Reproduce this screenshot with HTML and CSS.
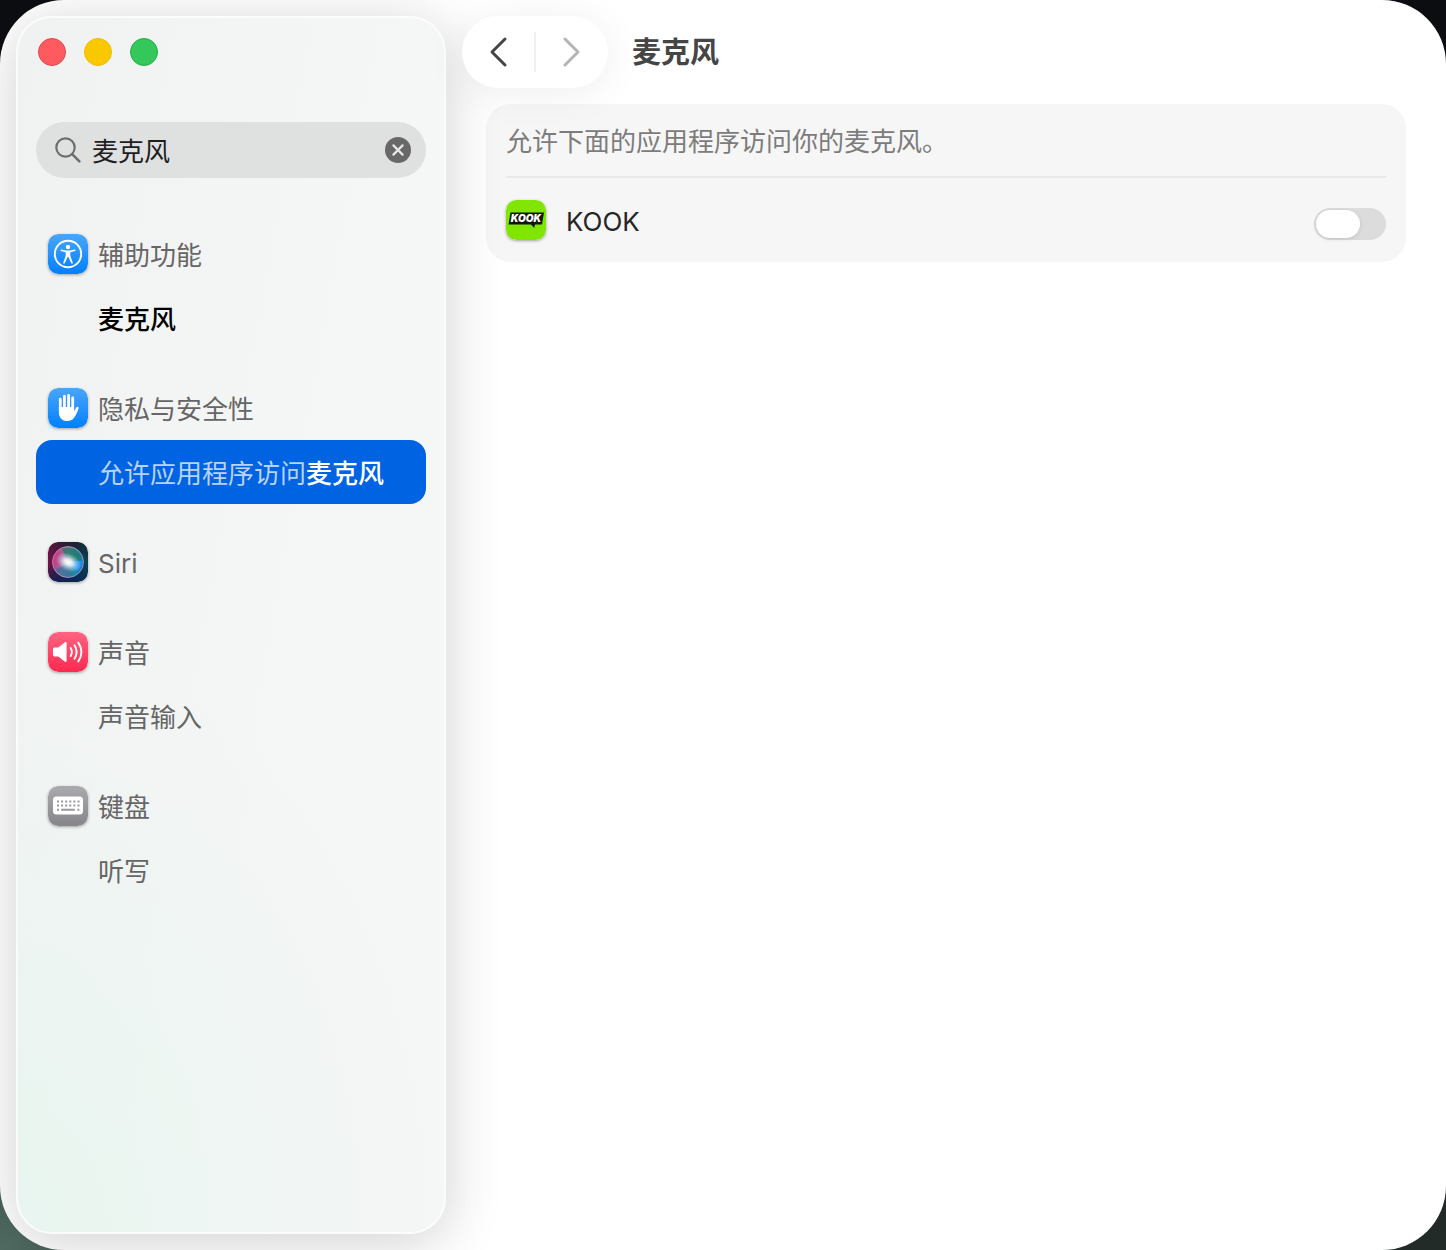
FILE: index.html
```html
<!DOCTYPE html>
<html lang="zh-CN">
<head>
<meta charset="utf-8">
<meta name="viewport" content="width=device-width, initial-scale=1">
<title>麦克风</title>
<link rel="stylesheet" href="styles.css">
</head>
<body>
<div class="window">
  <aside class="sidebar">
    <div class="lights">
      <button class="light light-close" aria-label="关闭"></button>
      <button class="light light-min" aria-label="最小化"></button>
      <button class="light light-zoom" aria-label="缩放"></button>
    </div>
    <form class="search" role="search">
      <label class="search-icon" for="q" aria-label="搜索">
        <svg width="28" height="28" viewBox="0 0 28 28" fill="none" stroke="#6e6e6e" stroke-width="2.2" stroke-linecap="round"><circle cx="11.5" cy="11.5" r="9.2"/><path d="M18.4 18.4l7 7" stroke-width="2.6"/></svg>
      </label>
      <input class="search-input" id="q" type="text" value="麦克风">
      <button class="search-clear" type="reset" aria-label="清除">
        <svg width="26" height="26" viewBox="0 0 26 26"><circle cx="13" cy="13" r="13" fill="#686868"/><path d="M8.4 8.4l9.2 9.2M17.6 8.4l-9.2 9.2" stroke="#e6e6e6" stroke-width="2.2" stroke-linecap="round"/></svg>
      </button>
    </form>
    <nav class="results">
      <section class="group">
        <a class="row" href="#accessibility">
          <svg class="icon" width="40" height="40" viewBox="0 0 40 40">
            <defs><linearGradient id="blue" x1="0" y1="0" x2="0" y2="1"><stop offset="0" stop-color="#4aa6f8"/><stop offset="1" stop-color="#0080ff"/></linearGradient></defs>
            <rect width="40" height="40" rx="10" fill="url(#blue)"/>
            <circle cx="20" cy="20" r="13.2" fill="none" stroke="#fff" stroke-width="1.9"/>
            <circle cx="20" cy="13" r="2.2" fill="#fff"/>
            <path d="M13.2 15.6c-.8-.2-1 1-.2 1.300l4.700 1.300v3.600l-2.500 7c-.3.900 1.100 1.400 1.500.5l3-6.500h.6l3 6.500c.4.900 1.800.4 1.500-.5l-2.500-7v-3.600l4.700-1.300c.8-.3.600-1.500-.2-1.300l-4.600 1h-4.400z" fill="#fff"/>
          </svg>
          <span>辅助功能</span>
        </a>
        <a class="row sub" href="#mic-accessibility"><span><b>麦克风</b></span></a>
      </section>
      <section class="group">
        <a class="row" href="#privacy">
          <svg class="icon" width="40" height="40" viewBox="0 0 40 40">
            <rect width="40" height="40" rx="10" fill="url(#blue)"/>
            <g fill="none" stroke="#fff" stroke-width="2.800" stroke-linecap="round"><path d="M12.300 11.200v12M16.400 8.200v14M20.600 7.400v14M24.700 9.800v13"/></g>
            <path d="M10.900 19h15.200v4.200l2.300-3.900c.7-1.100 2.700-.5 2.200 1-1.400 4.300-2.700 7.200-4.700 9.800-1.700 2.200-4 3-6.700 3-5 0-8.300-3.200-8.300-8.600z" fill="#fff"/>
          </svg>
          <span>隐私与安全性</span>
        </a>
        <a class="row sub selected" href="#mic" aria-current="page"><span>允许应用程序访问<b>麦克风</b></span></a>
      </section>
      <section class="group">
        <a class="row" href="#siri">
          <svg class="icon" width="40" height="40" viewBox="0 0 40 40">
            <defs>
              <linearGradient id="siri-bg" x1="0" y1=".2" x2="1" y2=".5"><stop offset="0" stop-color="#8a0f4a"/><stop offset=".45" stop-color="#27223f"/><stop offset="1" stop-color="#06464f"/></linearGradient>
              <linearGradient id="siri-shade" x1="0" y1="0" x2="0" y2="1"><stop offset="0" stop-color="#1b1c20" stop-opacity=".5"/><stop offset=".5" stop-color="#14204a" stop-opacity="0"/><stop offset="1" stop-color="#0b1e5c" stop-opacity=".7"/></linearGradient>
              <linearGradient id="siri-orb" x1="0" y1=".4" x2="1" y2=".6"><stop offset="0" stop-color="#d2327e"/><stop offset=".4" stop-color="#98729c"/><stop offset=".7" stop-color="#1d8f96"/><stop offset="1" stop-color="#1c78d8"/></linearGradient>
              <radialGradient id="siri-glow"><stop offset="0" stop-color="#fff"/><stop offset=".3" stop-color="#fff" stop-opacity=".85"/><stop offset="1" stop-color="#bcd8ff" stop-opacity="0"/></radialGradient>
            </defs>
            <rect width="40" height="40" rx="10" fill="url(#siri-bg)"/>
            <rect width="40" height="40" rx="10" fill="url(#siri-shade)"/>
            <circle cx="20" cy="20" r="15.500" fill="url(#siri-orb)"/>
            <path d="M14 6.500C22 3 33 9 34.500 18L20 20z" fill="#207a66" opacity=".75"/>
            <path d="M7 27c5-1 9-4 13-7l5 14c-7 3-14 1-18-7z" fill="#37739d" opacity=".75"/>
            <path d="M20 20l14-1c0 4-2 8-5 10z" fill="#2695ff" opacity=".8"/>
            <circle cx="20" cy="20" r="15.500" fill="none" stroke="#d8a7d2" stroke-width=".8" opacity=".8"/>
            <ellipse cx="20.500" cy="20" rx="13" ry="9" fill="url(#siri-glow)" transform="rotate(25 20 20)"/>
          </svg>
          <span>Siri</span>
        </a>
      </section>
      <section class="group">
        <a class="row" href="#sound">
          <svg class="icon" width="40" height="40" viewBox="0 0 40 40">
            <defs><linearGradient id="pink" x1="0" y1="0" x2="0" y2="1"><stop offset="0" stop-color="#ff6482"/><stop offset="1" stop-color="#ff2850"/></linearGradient></defs>
            <rect width="40" height="40" rx="10" fill="url(#pink)"/>
            <path d="M5 17.500c0-1.400.7-2 2-2h3.300l6.300-5.100c.9-.8 2-.4 2 .8v17.600c0 1.200-1.100 1.600-2 .8l-6.300-5.100H7c-1.300 0-2-.6-2-2z" fill="#fff"/>
            <g fill="none" stroke="#fff" stroke-width="1.900" stroke-linecap="round"><path d="M22.700 16c1.500 2.600 1.500 5.400 0 8M26.500 13.300c2.700 4.300 2.700 9.100 0 13.400M30.300 10.600c4 6 4 12.800 0 18.800"/></g>
          </svg>
          <span>声音</span>
        </a>
        <a class="row sub" href="#input"><span>声音输入</span></a>
      </section>
      <section class="group">
        <a class="row" href="#keyboard">
          <svg class="icon" width="40" height="40" viewBox="0 0 40 40">
            <defs><linearGradient id="gray" x1="0" y1="0" x2="0" y2="1"><stop offset="0" stop-color="#aaaaaf"/><stop offset="1" stop-color="#86868a"/></linearGradient></defs>
            <rect width="40" height="40" rx="10" fill="url(#gray)"/>
            <rect x="5" y="10.500" width="30" height="18" rx="3.500" fill="#fff"/>
            <g stroke="#98989c" stroke-width="1.900" fill="none"><path d="M9 15.500h22.500M9 19.500h22.500" stroke-dasharray="2 2.100"/><path d="M9 23.700h2M13.200 23.700h13.600M29.400 23.700h2"/></g>
          </svg>
          <span>键盘</span>
        </a>
        <a class="row sub" href="#dictation"><span>听写</span></a>
      </section>
    </nav>
  </aside>
  <main class="content">
    <header class="toolbar">
      <div class="history">
        <button class="history-btn" aria-label="返回"><svg width="20" height="32" viewBox="0 0 20 32" fill="none" stroke="#454545" stroke-width="3" stroke-linecap="round" stroke-linejoin="round"><path d="M17 3L4 16l13 13"/></svg></button>
        <button class="history-btn" aria-label="前进" disabled><svg width="20" height="32" viewBox="0 0 20 32" fill="none" stroke="#b4b4b4" stroke-width="3" stroke-linecap="round" stroke-linejoin="round"><path d="M3 3l13 13L3 29"/></svg></button>
      </div>
      <h1 class="title">麦克风</h1>
    </header>
    <section class="card">
      <p class="card-note">允许下面的应用程序访问你的麦克风。</p>
      <div class="app">
        <svg class="icon" width="40" height="40" viewBox="0 0 40 40" aria-hidden="true">
          <rect width="40" height="40" rx="10" fill="#80e600"/>
          <path d="M4.500 12.500H38l-2 12h-7l-.8 3.500-3.200-3.500H2.500z" fill="#101510"/>
          <text class="kook-mark" x="20" y="22" text-anchor="middle">KOOK</text>
        </svg>
        <label class="app-name" for="kook">KOOK</label>
        <input class="switch" id="kook" type="checkbox" role="switch">
      </div>
    </section>
  </main>
</div>
</body>
</html>
```
FILE: styles.css
```css
* {
  box-sizing: border-box;
}

body {
  margin: 0;
  background:
    radial-gradient(circle at 0 100%, #4f6a61 0, transparent 240px),
    linear-gradient(#0c0d10 60%, #232b28);
  color: #262626;
  font: 26px/36px Inter, "Noto Sans CJK SC", sans-serif;
}

button {
  margin: 0;
  padding: 0;
  border: 0;
  background: none;
}

svg {
  display: block;
}

.window {
  display: flex;
  min-height: 100vh;
  padding: 16px 40px 16px 16px;
  gap: 16px;
  border-radius: 64px;
  overflow: hidden;
  background: #fff;
}

/* Sidebar */

.sidebar {
  flex: 0 0 430px;
  min-width: 0;
  padding: 22px 20px;
  border-radius: 36px;
  background:
    radial-gradient(ellipse 420px 600px at 0 100%, #e8f5ef, transparent),
    linear-gradient(100deg, #f0f2f2, #f5f6f6 60%);
  box-shadow:
    inset 0 0 0 2px rgba(255, 255, 255, 0.7),
    0 8px 56px rgba(0, 0, 0, 0.19);
}

.lights {
  display: flex;
  gap: 18px;
  padding: 0 2px;
  margin-bottom: 56px;
}

.light {
  width: 28px;
  height: 28px;
  border: 1px solid;
  border-radius: 50%;
}

.light-close {
  background: #ff5a5f;
  border-color: #e0474d;
}

.light-min {
  background: #fac800;
  border-color: #eebc00;
}

.light-zoom {
  background: #34c759;
  border-color: #24ae48;
}

.search {
  display: flex;
  align-items: center;
  height: 56px;
  margin-bottom: 44px;
  padding: 0 15px 0 18px;
  border-radius: 28px;
  background: #dfe0e0;
}

.search-input {
  flex: 1;
  min-width: 0;
  padding: 3px 10px 0;
  border: 0;
  outline: 0;
  background: none;
  color: #1e1e1e;
  font: inherit;
}

.results {
  display: grid;
  gap: 26px;
}

.row {
  display: flex;
  align-items: center;
  gap: 10px;
  height: 64px;
  padding: 0 12px;
  border-radius: 16px;
  color: #666;
  text-decoration: none;
}

.row span {
  padding-top: 3px;
  white-space: nowrap;
}

.row b {
  color: #000;
  font-weight: 500;
}

.sub {
  padding-left: 62px;
}

.selected {
  background: #0063e1;
  color: #b8d3f7;
}

.selected b {
  color: #fff;
}

.icon {
  flex: none;
  border-radius: 10px;
  box-shadow: 0 1px 3px rgba(0, 0, 0, 0.35);
}

/* Content */

.content {
  flex: 1;
  min-width: 0;
}

.toolbar {
  display: flex;
  align-items: center;
  gap: 24px;
  margin-bottom: 16px;
}

.history {
  display: flex;
  align-items: center;
  width: 146px;
  height: 72px;
  border-radius: 36px;
  background: #fff;
  box-shadow: 0 4px 40px rgba(0, 0, 0, 0.07);
}

.history-btn {
  display: grid;
  flex: 1;
  place-items: center;
  height: 40px;
}

.history-btn + .history-btn {
  border-left: 2px solid #f0f0f0;
}

.title {
  margin: 0;
  padding-top: 2px;
  color: #454545;
  font-size: 29px;
  font-weight: 700;
}

.card {
  margin-left: 24px;
  padding: 0 20px;
  border-radius: 24px;
  background: rgba(0, 0, 0, 0.035);
}

.card-note {
  margin: 0;
  padding: 20px 0 16px;
  border-bottom: 2px solid #e8e8e8;
  color: #7c7c7c;
}

.app {
  display: flex;
  align-items: flex-end;
  gap: 20px;
  padding: 22px 0;
}

.app-name {
  flex: 1;
  align-self: center;
  padding-top: 3px;
}

.kook-mark {
  fill: #fff;
  font: italic 900 10px Inter, sans-serif;
}

.switch {
  width: 72px;
  height: 32px;
  margin: 0;
  padding: 2px;
  border-radius: 16px;
  appearance: none;
  background: #dcdcdc;
}

.switch::before {
  content: "";
  display: block;
  width: 44px;
  height: 28px;
  border-radius: 14px;
  background: #fff;
  box-shadow: 0 1px 4px rgba(0, 0, 0, 0.12);
}

.switch:checked {
  background: #0063e1;
}

.switch:checked::before {
  margin-left: auto;
}
```
